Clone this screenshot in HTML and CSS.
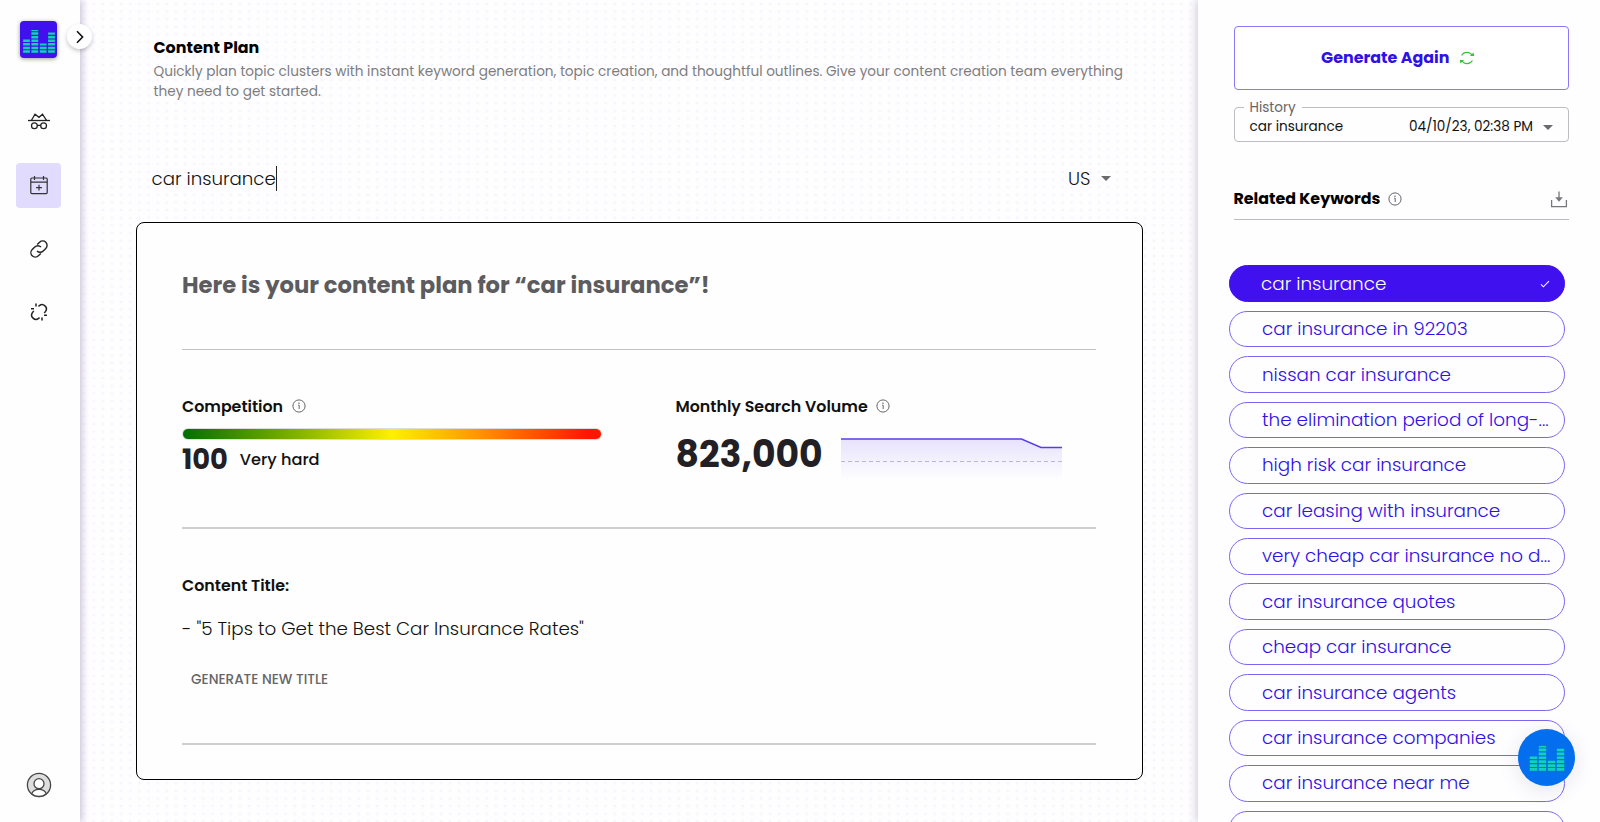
FILE: index.html
```
<!DOCTYPE html>
<html lang="en">
<head>
    <meta charset="UTF-8">
    <meta name="viewport" content="width=device-width, initial-scale=1.0">
    <title>Content Plan</title>
    <link rel="stylesheet" href="styles.css">
</head>
<body>
    <!-- shared shapes -->
    <svg class="sprite">
        <symbol id="bars" viewBox="0 0 32 24">
            <g fill="none" stroke="#0fd3b4" stroke-width="6.8">
                <path stroke-dasharray="2.5 1.1" d="M3.5 23.8V10.5"/>
                <path stroke-dasharray="2.5 1.1" d="M11.8 23.8V1"/>
                <path stroke-dasharray="2.5 1.1" d="M20.2 23.8V14.5"/>
                <path stroke-dasharray="2.5 1.1" d="M28.5 23.8V3.5"/>
            </g>
        </symbol>
        <symbol id="info" viewBox="0 0 14 14">
            <circle cx="7" cy="7" r="6.1" fill="none" stroke="#555" stroke-width="0.9"/>
            <path d="M6.2 6.2H7.2V10" fill="none" stroke="#555" stroke-width="0.9"/>
            <circle cx="7" cy="4.2" r="0.7" fill="#555"/>
        </symbol>
    </svg>

    <div class="app">
        <nav class="sidebar">
            <div class="logo"><svg width="32" height="24"><use href="#bars"/></svg></div>
            <div class="toggle">
                <svg width="8" height="14" viewBox="0 0 8 14"><path d="M1 1.2L6.6 7L1 12.8" fill="none" stroke="#111" stroke-width="1.6"/></svg>
            </div>
            <a class="nav-item">
                <svg width="24" height="20" viewBox="0 0 24 20" fill="none" stroke="#222" stroke-width="1.3">
                    <path d="M1 9.5H23"/>
                    <path d="M4.5 9.3L8 3.2L12 6.3L15.5 3.2L19.5 9.3"/>
                    <circle cx="7.4" cy="14.8" r="2.9"/>
                    <circle cx="16.6" cy="14.8" r="2.9"/>
                    <path d="M10.2 14.4H13.8"/>
                </svg>
            </a>
            <a class="nav-item active">
                <svg width="20" height="20" viewBox="0 0 20 20" fill="none" stroke="#333" stroke-width="1.2">
                    <rect x="1.8" y="3" width="16.4" height="15.6" rx="1"/>
                    <path d="M1.8 7.2H18.2M5.5 1V5M14.5 1V5M10 9.8V15.6M7.1 12.7H12.9"/>
                </svg>
            </a>
            <a class="nav-item">
                <svg width="20" height="20" viewBox="0 0 20 20" fill="none" stroke="#222" stroke-width="1.4">
                    <path d="M8.2 5.6L10.6 3.2A4.35 4.35 0 0 1 16.8 9.4L14.2 12A4.35 4.35 0 0 1 8 12"/>
                    <path d="M11.8 14.4L9.4 16.8A4.35 4.35 0 0 1 3.2 10.6L5.8 8A4.35 4.35 0 0 1 12 8"/>
                </svg>
            </a>
            <a class="nav-item">
                <svg width="20" height="20" viewBox="0 0 20 20" fill="none" stroke="#222" stroke-width="1.5">
                    <path d="M9.4 4.3L10.4 3.6A4.3 4.3 0 0 1 16.6 9.4L15.2 11"/>
                    <path d="M10.6 15.7L9.6 16.4A4.3 4.3 0 0 1 3.4 10.6L4.8 9"/>
                    <path d="M7 1.6V4.6M2 6.8H5M13 15.4V18.4M15 13.2H18"/>
                </svg>
            </a>
            <a class="avatar">
                <svg width="26" height="26" viewBox="0 0 26 26" stroke="#444" stroke-width="1.3">
                    <circle cx="13" cy="13" r="11.6" fill="#dedede"/>
                    <path d="M5.7 21.8C8 15.8 18 15.8 20.3 21.8C16.5 25.4 9.5 25.4 5.7 21.8Z" fill="#fff"/>
                    <circle cx="13" cy="11.7" r="5" fill="#fff"/>
                </svg>
            </a>
        </nav>

        <main class="main">
            <h1>Content Plan</h1>
            <p class="desc">Quickly plan topic clusters with instant keyword generation, topic creation, and thoughtful outlines. Give your content creation team everything<br>they need to get started.</p>

            <div class="search">
                <span class="query">car insurance</span>
                <span class="caret"></span>
                <span class="country">US</span>
                <span class="arrow"></span>
            </div>

            <section class="card">
                <h2>Here is your content plan for “car insurance”!</h2>
                <div class="metrics">
                    <div class="competition">
                        <h3>Competition <svg width="14" height="14"><use href="#info"/></svg></h3>
                        <div class="meter"></div>
                        <div class="score"><b>100</b><span>Very hard</span></div>
                    </div>
                    <div class="volume">
                        <h3>Monthly Search Volume <svg width="14" height="14"><use href="#info"/></svg></h3>
                        <div class="volume-row">
                            <b>823,000</b>
                            <svg class="chart" width="221" height="44" viewBox="0 0 221 44">
                                <defs>
                                    <linearGradient id="fade" x1="0" y1="0" x2="0" y2="1">
                                        <stop offset="0" stop-color="#e7e2fc"/>
                                        <stop offset="1" stop-color="#e7e2fc" stop-opacity="0"/>
                                    </linearGradient>
                                </defs>
                                <path d="M0 2H180.5L200 10.5H221V43H0Z" fill="url(#fade)"/>
                                <path d="M0 24.5H221" stroke="#bdb6d3" stroke-dasharray="4 3"/>
                                <path d="M0 2H180.5L200 10.5H221" fill="none" stroke="#5a3cf0" stroke-width="1.4"/>
                            </svg>
                        </div>
                    </div>
                </div>
                <div class="content-title">
                    <h3>Content Title:</h3>
                    <p>- "5 Tips to Get the Best Car Insurance Rates"</p>
                    <button>GENERATE NEW TITLE</button>
                </div>
            </section>
        </main>

        <aside class="panel">
            <button class="generate">
                <span>Generate Again</span>
                <svg width="16" height="14" viewBox="0 0 16 14" fill="none" stroke="#35c435" stroke-width="1.1">
                    <path d="M2.6 4.6A6 6 0 0 1 13.3 4.8"/>
                    <path d="M13.4 9.4A6 6 0 0 1 2.7 9.2"/>
                    <path d="M10.9 4.9L15.2 5L14.6 1.6Z" fill="#35c435" stroke="none"/>
                    <path d="M5.1 9.1L0.8 9L1.4 12.4Z" fill="#35c435" stroke="none"/>
                </svg>
            </button>
            <fieldset class="history">
                <legend>History</legend>
                <span>car insurance</span>
                <span class="history-date">04/10/23, 02:38 PM</span>
                <span class="arrow"></span>
            </fieldset>
            <div class="related">
                <h3>Related Keywords</h3>
                <svg width="14" height="14"><use href="#info"/></svg>
                <svg class="download" width="18" height="17" viewBox="0 0 18 17" fill="none" stroke="#777" stroke-width="1.3">
                    <path d="M1.6 9V15.6H16.4V9M9 0.6V8"/>
                    <path d="M5.2 6.2H12.8L9 10.8Z" fill="#777" stroke="none"/>
                </svg>
            </div>
            <ul class="keywords">
                <li class="selected"><span>car insurance</span>
                    <svg width="10" height="8" viewBox="0 0 10 8"><path d="M1 4.4L3.4 6.8L9 1.2" fill="none" stroke="#fff" stroke-width="1.1"/></svg>
                </li>
                <li><span>car insurance in 92203</span></li>
                <li><span>nissan car insurance</span></li>
                <li><span>the elimination period of long-...</span></li>
                <li><span>high risk car insurance</span></li>
                <li><span>car leasing with insurance</span></li>
                <li><span>very cheap car insurance no d...</span></li>
                <li><span>car insurance quotes</span></li>
                <li><span>cheap car insurance</span></li>
                <li><span>car insurance agents</span></li>
                <li><span>car insurance companies</span></li>
                <li><span>car insurance near me</span></li>
                <li><span>cheapest car insurance</span></li>
            </ul>
        </aside>
    </div>

    <div class="chat"><svg width="36" height="26"><use href="#bars"/></svg></div>
</body>
</html>
```
FILE: styles.css
```
* {
    margin: 0;
    padding: 0;
    box-sizing: border-box;
    font-family: Poppins, Inter, sans-serif;
}
body {
    height: 100vh;
    overflow: hidden;
    background: #fefdff;
    color: #111;
}
.sprite {
    display: none;
}
h1, h2, h3, b {
    white-space: nowrap;
}
.app {
    display: grid;
    grid-template-columns: 80px minmax(0, 1fr) 402.5px;
    height: 822px;
}

/* sidebar */
.sidebar {
    position: relative;
    z-index: 2;
    display: flex;
    flex-direction: column;
    align-items: center;
    padding: 21px 3px 24px 0;
    background: #fefefe;
    box-shadow: 2px 0 7px rgba(50, 35, 110, 0.27);
}
.logo {
    display: flex;
    align-items: center;
    justify-content: center;
    width: 37px;
    height: 37px;
    margin-bottom: 41px;
    padding-top: 2px;
    border-radius: 4px;
    background: #4010ee;
    box-shadow: 0 1px 4px rgba(0, 0, 0, 0.4);
}
.toggle {
    position: absolute;
    top: 24px;
    left: 67px;
    display: flex;
    align-items: center;
    justify-content: center;
    width: 25px;
    height: 25px;
    border-radius: 50%;
    background: #fff;
    box-shadow: 0 2px 4px rgba(0, 0, 0, 0.22);
}
.nav-item {
    display: flex;
    align-items: center;
    justify-content: center;
    width: 45px;
    height: 45px;
    margin-bottom: 18.8px;
    padding-bottom: 1px;
    border-radius: 4px;
}
.nav-item.active {
    background: #e1dbfe;
}
.avatar {
    height: 26px;
    margin-top: auto;
}

/* main column */
.main {
    padding: 38px 55px 0 55.5px;
    background-color: #fefdff;
    background-image: radial-gradient(circle, #f7f5fc 1px, transparent 1.8px);
    background-size: 9.15px 7.65px;
}
h1 {
    padding-left: 18px;
    font-size: 15.9px;
    line-height: 20px;
    color: #000;
}
.desc {
    margin: 4px 0 62px;
    padding-left: 18px;
    font-size: 13.63px;
    line-height: 20.3px;
    white-space: nowrap;
    color: #7d7d7d;
}
.search {
    display: flex;
    align-items: center;
    height: 28px;
    margin-bottom: 29.4px;
    padding: 0 32px 0 16px;
    font-size: 18.2px;
    font-weight: 300;
    line-height: 28px;
}
.caret {
    width: 1px;
    height: 25px;
    background: #222;
}
.country {
    margin-left: auto;
    margin-right: 10px;
}
.arrow {
    border: 5.7px solid transparent;
    border-top-color: #6b6b6b;
    border-bottom: 0;
}
.card {
    height: 558px;
    padding: 47px 46px 0 45.5px;
    border: 1px solid #000;
    border-radius: 8px;
    background: #fefefe;
}
h2 {
    padding-bottom: 48px;
    border-bottom: 1px solid #c2c2c2;
    font-size: 22.7px;
    line-height: 31px;
    margin-bottom: -1px;
    color: #5c5b5e;
}
h3 {
    font-size: 15.85px;
    font-weight: 600;
    line-height: 20px;
}
.card h3 svg {
    margin-left: 5px;
    vertical-align: -1.5px;
}
.metrics {
    display: grid;
    grid-template-columns: 493.5px 1fr;
    height: 180px;
    padding-top: 48px;
    border-bottom: 2px solid #cfcfcf;
}
.meter {
    width: 420px;
    height: 12px;
    margin: 11px 0 5px;
    border: 1px solid #ddd;
    border-radius: 6px;
    background: linear-gradient(90deg, #007000, #86b400 28%, #fff000 50%, #ff9800 70%, #ff1500 97%);
}
.score {
    display: flex;
    align-items: center;
    gap: 12px;
    line-height: 30px;
}
.score b {
    font-size: 27.3px;
    color: #222024;
}
.score span {
    font-size: 16.2px;
    font-weight: 500;
}
.volume-row {
    display: flex;
    gap: 20px;
    margin-top: 15px;
}
.volume-row b {
    width: 145.5px;
    font-size: 36.2px;
    line-height: 46px;
    color: #222024;
}
.chart {
    margin-top: 5px;
}
.content-title {
    height: 216px;
    padding-top: 47px;
    border-bottom: 2px solid #cfcfcf;
}
.content-title p {
    margin: 20px 0 28px;
    font-size: 18.3px;
    font-weight: 300;
    line-height: 26px;
}
.content-title button {
    display: block;
    margin-left: 9px;
    border: 0;
    background: none;
    font-size: 13.6px;
    font-weight: 500;
    line-height: 20px;
    color: #666;
}

/* right panel */
.panel {
    z-index: 1;
    height: 822px;
    padding: 26px 31px 0 36px;
    background: #fefdff;
    box-shadow: -2px 0 8px rgba(50, 35, 110, 0.22);
}
.generate {
    display: flex;
    align-items: center;
    justify-content: center;
    gap: 10px;
    width: 100%;
    height: 64px;
    padding: 0 6px 1px 0;
    border: 1px solid #8b78f8;
    border-radius: 4px;
    background: #fff;
    font-size: 15.9px;
    font-weight: 700;
    color: #2f10e6;
}
.history {
    display: flex;
    align-items: center;
    height: 42px;
    margin-top: 10px;
    padding: 0 15px 1px 15px;
    border: 1px solid #bdbdbd;
    border-radius: 4px;
    font-size: 13.6px;
}
.history legend {
    height: 14px;
    margin-left: -6px;
    padding: 0 6px;
    line-height: 16px;
    color: #666;
}
.history-date {
    margin: 0 10px 0 auto;
}
.related {
    display: flex;
    align-items: center;
    height: 41px;
    margin-top: 37px;
    border-bottom: 1px solid #bbb;
}
.related h3 {
    margin-right: 8px;
    font-weight: 700;
    color: #000;
}
.download {
    margin: 0 1px 0 auto;
}
.keywords {
    height: 557px;
    margin: 45.4px 0 0 -4.5px;
    overflow: hidden;
    list-style: none;
}
.keywords li {
    display: flex;
    align-items: center;
    justify-content: space-between;
    width: 336px;
    height: 36.5px;
    margin-bottom: 8.95px;
    padding-left: 32px;
    border: 1px solid #7b68f2;
    border-radius: 19px;
    font-size: 18.35px;
    font-weight: 300;
    line-height: 34px;
    white-space: nowrap;
    color: #2f10e6;
}
.keywords .selected {
    padding: 0 14px 0 31px;
    background: #4010ee;
    border-color: #4010ee;
    color: #fff;
}

/* floating chat button */
.chat {
    position: absolute;
    right: 25px;
    bottom: 36px;
    z-index: 3;
    display: flex;
    align-items: center;
    justify-content: center;
    width: 57px;
    height: 57px;
    border-radius: 50%;
    background: #036fee;
    box-shadow: 0 4px 22px rgba(0, 0, 0, 0.1);
}
```
